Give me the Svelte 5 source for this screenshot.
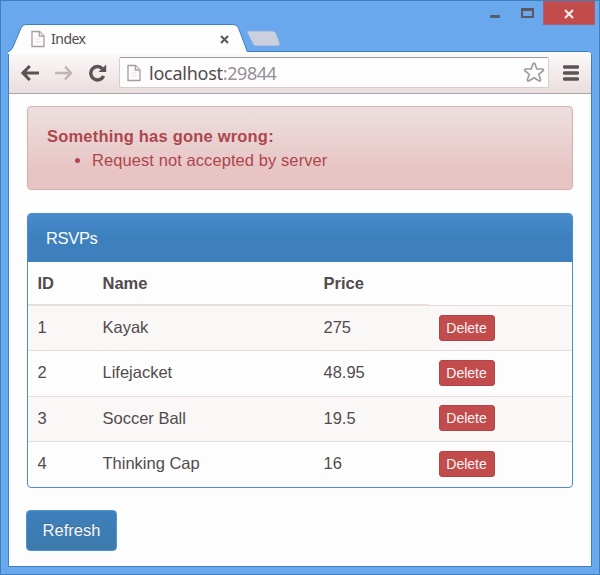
<script>
  const products = [
    { id: 1, name: 'Kayak', price: 275 },
    { id: 2, name: 'Lifejacket', price: 48.95 },
    { id: 3, name: 'Soccer Ball', price: 19.5 },
    { id: 4, name: 'Thinking Cap', price: 16 }
  ];
</script>

{#snippet page()}
  <svg class="page-icon" width="14" height="18" viewBox="0 0 14 18">
    <path d="M1 1.5H8.6L13 6V16.5H1Z" fill="#fdfbfb" stroke="#a59ca2" stroke-width="1.3" />
    <path d="M8.3 1.5V6.2H13" fill="#efe6e6" stroke="#a59ca2" stroke-width="1.2" />
    <path d="M4 9H9M4 12H10" stroke="#efe3e4" />
  </svg>
{/snippet}

<div class="window">
  <header class="titlebar">
    <div class="tab">
      <svg class="tab-shape" width="240" height="30" viewBox="0 0 240 30">
        <path d="M0 30V28Q3 27 5 23L13 4Q14.5.5 18 .5H225Q229 .5 230.5 4L238 24Q239 28 240 28V30Z" fill="#fdfdfd" />
        <path d="M0 28Q3 27 5 23L13 4Q14.5.5 18 .5H225Q229 .5 230.5 4L238 24Q239 28 240 28" fill="none" stroke="#3d80bd" />
      </svg>
      {@render page()}
      <span class="tab-title">Index</span>
      <svg class="tab-close" width="9" height="9" viewBox="0 0 9 9">
        <path d="M1 1L8 8M8 1L1 8" stroke="#5d5658" stroke-width="2" />
      </svg>
    </div>
    <svg class="new-tab" width="36" height="17" viewBox="0 0 36 17">
      <path d="M2 1H26Q29 1 30 3L34 14Q34 16 32 16H10Q8 16 7 14L1 2Z" fill="#cbcfde" stroke="#7fa9db" stroke-width=".7" />
    </svg>
    <div class="controls">
      <span class="control">
        <svg width="10" height="3"><rect width="10" height="3" rx="1" fill="#535d70" /></svg>
      </span>
      <span class="control maximize">
        <svg width="13" height="10"><path d="M1 1H12V9H1Z" fill="none" stroke="#5b5a62" stroke-width="2" /><path d="M0 1.5H13" stroke="#5b5a62" stroke-width="3" /></svg>
      </span>
      <span class="control close">
        <svg width="10" height="10"><path d="M1 1L9 9M9 1L1 9" stroke="#fbeeee" stroke-width="2" /></svg>
      </span>
    </div>
  </header>

  <div class="body">
    <nav class="toolbar">
      <svg class="back" width="19" height="16" viewBox="0 0 19 16">
        <path d="M8.8 1L2 8L8.8 15M2 8H18" fill="none" stroke="#5b5456" stroke-width="3.1" />
      </svg>
      <svg class="forward" width="18" height="16" viewBox="0 0 18 16">
        <path d="M10 1.5L16 8L10 14.5M0 8H16" fill="none" stroke="#c2b3b5" stroke-width="2.4" />
      </svg>
      <svg class="reload" width="19" height="18" viewBox="0 0 19 18">
        <path d="M14.5 4.8A6.7 6.7 0 1 0 15.6 12" fill="none" stroke="#5b5456" stroke-width="3.4" />
        <path d="M18.2 .5V8H10.5Z" fill="#5b5456" />
      </svg>
      <div class="address">
        {@render page()}
        <span class="url">localhost<span class="port">:29844</span></span>
        <svg class="star" width="22" height="21" viewBox="0 0 22 21">
          <path d="M11 1.2Q11.8 1.2 12.2 2.4L13.8 7H19.2Q21.5 7.6 19.8 9L15.8 12.2L17.5 17.4Q17.8 19.8 15.8 18.8L11 15.8L6.2 18.8Q4.2 19.8 4.5 17.4L6.2 12.2L2.2 9Q.5 7.6 2.8 7H8.2L9.8 2.4Q10.2 1.2 11 1.2Z" fill="#fdfdfd" stroke="#a29ba2" stroke-width="1.7" />
        </svg>
      </div>
      <svg class="menu" width="16" height="16" viewBox="0 0 16 16">
        <path d="M1.5 2H14.5M1.5 8H14.5M1.5 14H14.5" stroke="#5b5456" stroke-width="3.5" stroke-linecap="round" />
      </svg>
    </nav>

    <main>
      <section class="alert">
        <strong>Something has gone wrong:</strong>
        <ul><li>Request not accepted by server</li></ul>
      </section>

      <section class="panel">
        <div class="heading">RSVPs</div>
        <table>
          <thead>
            <tr><th class="id">ID</th><th class="name">Name</th><th class="price">Price</th><th class="action"></th></tr>
          </thead>
          <tbody>
            {#each products as product}
              <tr>
                <td>{product.id}</td>
                <td>{product.name}</td>
                <td>{product.price}</td>
                <td><button class="delete">Delete</button></td>
              </tr>
            {/each}
          </tbody>
        </table>
      </section>

      <button class="refresh">Refresh</button>
    </main>
  </div>
</div>

<style>
  :global(body) { margin: 0; }
  .window, .window * { box-sizing: border-box; }
  .window {
    width: 600px;
    height: 575px;
    display: flex;
    flex-direction: column;
    padding: 0 7px 7px 7px;
    border: 1px solid #3d80bd;
    background: #6aa8ee;
    font-family: "Liberation Sans", Arial, sans-serif;
    font-size: 16.5px;
    color: #524b4d;
    overflow: hidden;
  }
  svg { display: block; flex: none; }
  .titlebar { height: 50px; flex: none; display: flex; align-items: flex-start; }
  .tab {
    position: relative;
    z-index: 1;
    width: 240px;
    height: 30px;
    margin-top: 23px;
    padding: 0 19px 0 23px;
    display: flex;
    align-items: center;
  }
  .tab-shape { position: absolute; left: 0; top: 0; }
  .tab .page-icon, .tab-title, .tab-close { position: relative; }
  .tab-title { margin-left: 6px; font: 14px/18px "Noto Sans", sans-serif; letter-spacing: -.5px; }
  .tab-close { margin-left: auto; }
  .new-tab { margin: 29px 0 0 -2px; }
  .controls { margin-left: auto; margin-right: -3px; display: flex; height: 24px; }
  .control { width: 32px; display: flex; justify-content: center; padding-top: 14px; }
  .maximize { padding-top: 7px; }
  .close {
    width: 52px;
    background: #c24c4c;
    border: 1px solid #a8626f;
    border-top: 0;
    padding-top: 8px;
  }
  .body {
    flex: 1;
    min-height: 0;
    display: flex;
    flex-direction: column;
    border: 1px solid #3d80bd;
    border-radius: 0 4px 1px 1px;
    background: #fdfdfd;
  }
  .toolbar {
    height: 42px;
    flex: none;
    display: flex;
    align-items: center;
    padding: 0 12px;
    border-bottom: 1px solid #aaa2a8;
    background: linear-gradient(#fcfafa, #eadddd);
    border-radius: 0 3px 0 0;
  }
  .forward { margin-left: 15px; }
  .reload { margin-left: 15px; }
  .address {
    height: 31px;
    width: 430px;
    margin-left: 12px;
    padding: 0 3px 0 7px;
    display: flex;
    align-items: center;
    border: 1px solid #dcc9cb;
    border-top-color: #9f9aa2;
    border-radius: 2px;
    background: #fdfdfd;
  }
  .url { margin-left: 8px; font: 18px/24px "Noto Sans", sans-serif; letter-spacing: -.25px; }
  .port { color: #979097; letter-spacing: -.45px; }
  .star { margin-left: auto; }
  .menu { margin-left: 14px; }
  main { padding: 12px 18px 0 18px; }
  .alert {
    height: 84px;
    padding: 18px 19px;
    border: 1px solid #d9b0b2;
    border-radius: 4px;
    background: linear-gradient(#ecdfdf, #e8c5c5 75%);
    color: #ae464b;
    line-height: 23.5px;
  }
  .alert strong { display: block; letter-spacing: .2px; }
  .alert ul { margin: 0; padding-left: 45px; letter-spacing: .08px; }
  .panel {
    height: 275px;
    margin-top: 23px;
    border: 1px solid #4b8ece;
    border-radius: 4px;
    overflow: hidden;
  }
  .heading {
    height: 48px;
    padding: 0 18px;
    line-height: 48px;
    letter-spacing: -.35px;
    color: #fdfdfd;
    background: linear-gradient(#488ccc, #3d80bd 50%);
  }
  table { width: 100%; table-layout: fixed; border-collapse: separate; border-spacing: 0; }
  th, td { padding: 0 9.5px; text-align: left; }
  th { height: 44px; border-bottom: 2px solid #eadddd; }
  th.action { border-bottom: 1px solid #eadddd; }
  .id { width: 65px; }
  .name { width: 221px; }
  .price { width: 115px; }
  td { height: 45.25px; padding-bottom: 1px; border-bottom: 1px solid #eadddd; }
  tr:nth-child(odd) td { background: #faf7f7; }
  tr:last-child td { border-bottom: 0; }
  button { display: block; font-family: inherit; color: #fdf4f4; padding: 0; }
  .delete {
    width: 56px;
    height: 26px;
    border: 1px solid #b64347;
    border-radius: 3px;
    background: #c24c4c;
    font-size: 14px;
  }
  .refresh {
    width: 91px;
    height: 41px;
    margin-top: 22px;
    margin-left: -1px;
    border: 1px solid #5094d8;
    border-radius: 4px;
    background: linear-gradient(#3d80bd, #3d7aab);
    font-size: 16.5px;
    text-shadow: 0 -1px 0 #356c9b;
  }
</style>
